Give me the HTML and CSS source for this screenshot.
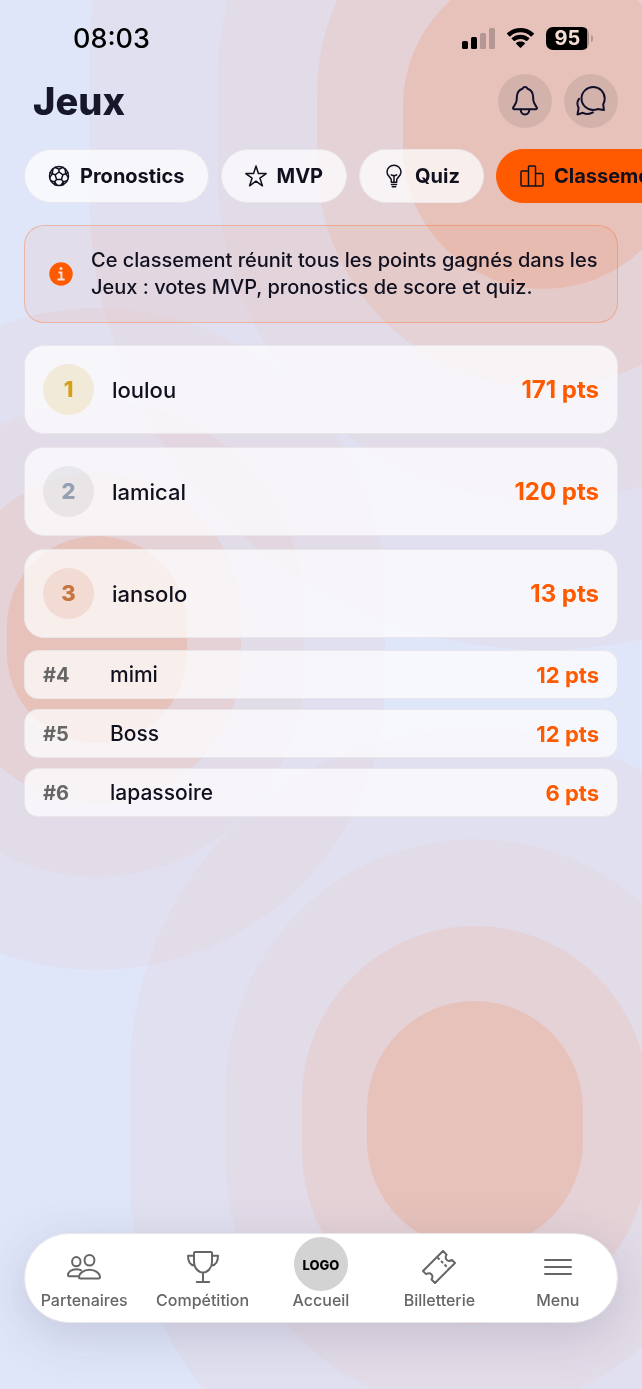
FILE: index.html
```html
<!DOCTYPE html>
<html lang="fr">
<head>
    <meta charset="UTF-8">
    <meta name="viewport" content="width=device-width, initial-scale=1.0">
    <title>Jeux</title>
    <link rel="stylesheet" href="styles.css">
</head>
<body>
    <svg class="backdrop" viewBox="0 0 642 1389" preserveAspectRatio="xMidYMid slice" aria-hidden="true">
        <g class="blob">
            <rect class="ring-outer" x="89" y="-396" width="910" height="1046" rx="455"/>
            <rect class="ring-outer" x="218" y="-248" width="652" height="749" rx="326"/>
            <rect class="ring-middle" x="317" y="-133" width="454" height="520" rx="227"/>
            <rect class="ring-inner" x="403" y="-35" width="282" height="324" rx="141"/>
        </g>
        <g class="blob">
            <rect class="ring-outer" x="-191" y="308" width="576" height="662" rx="288"/>
            <rect class="ring-outer" x="-110" y="401" width="414" height="476" rx="207"/>
            <rect class="ring-middle" x="-47" y="473" width="288" height="331" rx="144"/>
            <rect class="ring-inner" x="7" y="536" width="180" height="207" rx="90"/>
        </g>
        <g class="blob">
            <rect class="ring-outer" x="130" y="728" width="690" height="794" rx="345"/>
            <rect class="ring-outer" x="226" y="839" width="498" height="572" rx="249"/>
            <rect class="ring-middle" x="302" y="926" width="346" height="398" rx="173"/>
            <rect class="ring-inner" x="367" y="1001" width="216" height="248" rx="108"/>
        </g>
    </svg>

    <div class="status-bar">
        <span class="time">08:03</span>
        <div class="status-icons">
            <svg width="33" height="21" viewBox="0 0 33 21" aria-hidden="true">
                <rect x="0" y="13" width="6" height="8" rx="1.5"/>
                <rect x="9" y="9" width="6" height="12" rx="1.5"/>
                <rect class="faded" x="18" y="5" width="6" height="16" rx="1.5"/>
                <rect class="faded" x="27" y="0" width="6" height="21" rx="1.5"/>
            </svg>
            <svg width="29" height="21" viewBox="0 0 29 21" aria-hidden="true">
                <path d="M14.5 4.3c3.9 0 7.5 1.5 10.2 4.1.2.2.5.2.8 0l2.4-2.4c.2-.3.2-.6 0-.8-7.4-6.9-19.4-6.9-26.8 0-.2.2-.2.5 0 .8l2.4 2.4c.3.2.6.2.8 0C7 5.8 10.6 4.3 14.5 4.3z"/>
                <path d="M14.5 10.9c2.2 0 4.2.8 5.7 2.2.3.2.6.2.8 0l2.3-2.3c.2-.3.2-.6 0-.8-5-4.5-12.6-4.5-17.6 0-.2.2-.2.5 0 .8l2.3 2.3c.2.2.5.2.8 0 1.500-1.400 3.500-2.200 5.700-2.200z"/>
                <path d="M18.900 15.800c.2-.2.2-.6 0-.8-2.500-1.900-6.300-1.900-8.800 0-.2.2-.2.6 0 .8l4 4c.2.2.6.2.8 0z"/>
            </svg>
            <div class="battery">
                <span class="battery-level">95</span>
                <span class="battery-tip"></span>
            </div>
        </div>
    </div>

    <header class="page-header">
        <h1>Jeux</h1>
        <div class="header-actions">
            <button type="button" class="round-btn" aria-label="Notifications">
                <svg class="line-icon" width="26" height="30" viewBox="0 0 26 30">
                    <path d="M13 1c-1.300 0-2.100.8-2.500 1.700C6.800 4 5 7 4.900 10.500l-.2 3.500c-.2 4-3.400 6.500-3.600 8-.1.700.4 1.300 1.200 1.300h21.400c.8 0 1.300-.6 1.200-1.300-.2-1.500-3.400-4-3.600-8l-.2-3.500C21 7 19.200 4 15.500 2.700 15.100 1.800 14.300 1 13 1z"/>
                    <path d="M8.600 23.500c.2 2.900 1.900 4.900 4.400 4.900s4.200-2 4.400-4.900"/>
                </svg>
            </button>
            <button type="button" class="round-btn" aria-label="Messages">
                <svg class="line-icon" width="30" height="30" viewBox="0 0 30 30">
                    <path d="M27.200 18.200c1-1.700 1.500-3.700 1.500-5.700C28.700 6.200 23.600 1 17.200 1S5.500 6.200 5.500 12.500 10.800 24 17.200 24c1.500 0 3-.3 4.300-.9l6.400 1z"/>
                    <path d="M3 12.800c-2 2.800-2 6-.4 9L1.500 28.500l5.400-1.700c3 1.500 7 1.400 10-.4"/>
                </svg>
            </button>
        </div>
    </header>

    <div class="tabs">
        <button type="button" class="tab">
            <svg class="tab-icon" width="22" height="22" viewBox="0 0 22 22" aria-hidden="true">
                <circle cx="11" cy="11" r="9.5"/>
                <path d="M11 7l3.900 2.800-1.500 4.600H8.600L7.100 9.800zM11 7V4.200M14.900 9.800l2.900-1M13.400 14.400l1.800 2.400M8.600 14.400l-1.800 2.400M7.100 9.800l-2.900-1M7 2.400l4 1.800 4-1.800M20 7.700l-2.200 1.100L17 4M20.400 12.600l-2.600-3.800M19 16l-3.800.8.3 3M13 20.300l2.200-3.500M9 20.300l-2.200-3.500-.3 3M3 16l3.800.8M1.600 12.600l2.600-3.800L2 7.700M5 4l-.8 4.800"/>
            </svg>
            Pronostics
        </button>
        <button type="button" class="tab">
            <svg class="tab-icon" width="22" height="22" viewBox="0 0 22 22" aria-hidden="true">
                <path d="M11 1l2.400 7.600h7.800l-6.300 4.500 2.500 7.700L11 16.100 4.600 20.800l2.500-7.700L.8 8.600h7.800z"/>
            </svg>
            MVP
        </button>
        <button type="button" class="tab">
            <svg class="tab-icon" width="22" height="24" viewBox="0 0 22 24" aria-hidden="true">
                <path d="M8.300 18.300v-2.200c0-1.200-.6-1.800-1.500-2.700C5 11.800 4 10.300 4 8c0-3.800 3.100-6.800 7-6.800S18 4.200 18 8c0 2.300-1 3.800-2.800 5.400-.9.900-1.500 1.500-1.500 2.700v2.200zM8.500 20.500h5M9.300 22.700h3.400M11 18v-6.500M8.300 10.800c1.800 1 3.600 1 5.400 0"/>
            </svg>
            Quiz
        </button>
        <button type="button" class="tab active">
            <svg class="tab-icon" width="24" height="22" viewBox="0 0 24 22" aria-hidden="true">
                <path d="M8.500 21V2c0-.6.4-1 1-1h5c.6 0 1 .4 1 1v19M8.500 6H2c-.6 0-1 .4-1 1v13c0 .6.4 1 1 1h20c.6 0 1-.4 1-1V9.500c0-.6-.4-1-1-1h-6.500"/>
            </svg>
            Classement
        </button>
    </div>

    <main>
        <div class="info-box">
            <svg class="info-icon" width="24" height="24" viewBox="0 0 24 24" aria-hidden="true">
                <circle class="info-disc" cx="12" cy="12" r="11.7"/>
                <circle class="info-dot" cx="12" cy="6.5" r="1.5"/>
                <path class="info-stem" d="M9.500 10.500h2.900v7M8.500 17.500h7.200"/>
            </svg>
            <p>Ce classement réunit tous les points gagnés dans les Jeux : votes MVP, pronostics de score et quiz.</p>
        </div>

        <ol class="podium">
            <li class="player-card">
                <span class="medal gold">1</span>
                <span class="player">loulou</span>
                <span class="points">171 pts</span>
            </li>
            <li class="player-card">
                <span class="medal silver">2</span>
                <span class="player">lamical</span>
                <span class="points">120 pts</span>
            </li>
            <li class="player-card">
                <span class="medal bronze">3</span>
                <span class="player">iansolo</span>
                <span class="points">13 pts</span>
            </li>
        </ol>

        <ol class="ranking" start="4">
            <li class="player-row">
                <span class="rank">#4</span>
                <span class="player">mimi</span>
                <span class="points">12 pts</span>
            </li>
            <li class="player-row">
                <span class="rank">#5</span>
                <span class="player">Boss</span>
                <span class="points">12 pts</span>
            </li>
            <li class="player-row">
                <span class="rank">#6</span>
                <span class="player">lapassoire</span>
                <span class="points">6 pts</span>
            </li>
        </ol>
    </main>

    <nav class="bottom-nav">
        <a href="#partenaires" class="nav-item">
            <span class="nav-icon">
                <svg width="34" height="26" viewBox="0 0 34 26" aria-hidden="true">
                    <ellipse cx="9.3" cy="7.7" rx="4.2" ry="4.6"/>
                    <ellipse cx="22.5" cy="6.3" rx="4.9" ry="5.3"/>
                    <path d="M10.500 22.300H2c-.7 0-1-.4-1-1 0-3.300 3.300-6 8.300-6 1.800 0 3.300.3 4.600.9M22.500 15.800c-6.300 0-10.500 3.800-10.500 7.200 0 .9.5 1.500 1.500 1.500h18c1 0 1.500-.6 1.500-1.500 0-3.400-4.200-7.200-10.500-7.200z"/>
                </svg>
            </span>
            Partenaires
        </a>
        <a href="#competition" class="nav-item">
            <span class="nav-icon">
                <svg width="32" height="32" viewBox="0 0 32 32" aria-hidden="true">
                    <path d="M7 2c0-.6.4-1 1-1h16c.6 0 1 .4 1 1v9c0 6-4.500 10.500-9 10.500S7 17 7 11zM7 4.700H1c0 5 2 9.300 6.300 9.800M25 4.700h6c0 5-2 9.300-6.300 9.800M16 21.500V31M9.800 31h12.400"/>
                </svg>
            </span>
            Compétition
        </a>
        <a href="#accueil" class="nav-item">
            <span class="nav-icon"><span class="logo">LOGO</span></span>
            Accueil
        </a>
        <a href="#billetterie" class="nav-item">
            <span class="nav-icon">
                <svg width="34" height="34" viewBox="0 0 34 34" aria-hidden="true">
                    <path d="M21 1L1 21l3.100 3.100c2-1.100 4.200-1 5.300.1s1.300 3.200.1 5.300L13 33l20-20-3-3c-2 1.100-4.200 1-5.300-.1s-1.300-3.200-.1-5.300z"/>
                    <path class="perforation" d="M15.500 7.500l11 11"/>
                </svg>
            </span>
            Billetterie
        </a>
        <a href="#menu" class="nav-item">
            <span class="nav-icon">
                <svg width="28" height="16" viewBox="0 0 28 16" aria-hidden="true">
                    <path d="M1 1h26M1 8h26M1 15h26"/>
                </svg>
            </span>
            Menu
        </a>
    </nav>
</body>
</html>
```
FILE: styles.css
```css
* {
    box-sizing: border-box;
}
body {
    font-family: Inter, "Liberation Sans", sans-serif;
    background: #e0e6f9;
    color: #10101f;
    margin: 0;
    min-height: 100vh;
    display: flex;
    flex-direction: column;
    overflow-x: hidden;
}
button {
    font: inherit;
    color: inherit;
    border: none;
    cursor: pointer;
}
svg {
    flex: none;
}

/* background rings */
.backdrop {
    position: fixed;
    inset: 0;
    width: 100%;
    height: 100%;
    z-index: -1;
}
.blob {
    fill: #ff5a00;
}
.ring-outer {
    fill-opacity: 0.035;
}
.ring-middle {
    fill-opacity: 0.075;
}
.ring-inner {
    fill-opacity: 0.135;
}

.status-bar {
    display: flex;
    justify-content: space-between;
    align-items: center;
    padding: 10px 49px 8px 73px;
    height: 74px;
    color: #000;
}
.time {
    font-size: 27px;
    font-weight: 500;
}
.status-icons {
    display: flex;
    align-items: center;
    gap: 11px;
}
.faded {
    opacity: 0.22;
}
.battery {
    display: flex;
    align-items: center;
    gap: 2px;
}
.battery-level {
    width: 43px;
    height: 23px;
    border-radius: 7px;
    background: linear-gradient(90deg, #000 95%, #a88e87 95%);
    color: #f3dcd6;
    font-size: 20px;
    font-weight: 700;
    line-height: 23px;
    text-align: center;
}
.battery-tip {
    width: 2px;
    height: 7px;
    border-radius: 0 2px 2px 0;
    background: #b59a92;
}

.page-header {
    display: flex;
    justify-content: space-between;
    align-items: center;
    padding: 0 24px 0 33px;
}
h1 {
    margin: 0;
    font-size: 38px;
    line-height: 52px;
    font-weight: 800;
    color: #17172b;
}
.header-actions {
    display: flex;
    gap: 12px;
}
.round-btn {
    width: 54px;
    height: 54px;
    padding: 0;
    border-radius: 50%;
    background: rgba(0, 0, 0, 0.08);
    display: flex;
    align-items: center;
    justify-content: center;
}
.line-icon {
    fill: none;
    stroke: #10102a;
    stroke-width: 2;
    stroke-linejoin: round;
    stroke-linecap: round;
}

.tabs {
    display: flex;
    gap: 12px;
    padding: 21px 24px 22px;
    overflow-x: auto;
    scrollbar-width: none;
}
.tab {
    display: flex;
    align-items: center;
    gap: 10px;
    flex: none;
    height: 54px;
    padding: 0 23px;
    border: 1px solid #e9e6ea;
    border-radius: 27px;
    background: rgba(255, 255, 255, 0.72);
    font-size: 20px;
    font-weight: 700;
}
.tab.active {
    background: #ff5a00;
    border-color: #ff5a00;
}
.tab-icon {
    fill: none;
    stroke: currentColor;
    stroke-width: 1.5;
    stroke-linejoin: round;
    stroke-linecap: round;
}

main {
    flex: 1;
    padding: 0 24px 24px;
}
.info-box {
    display: flex;
    align-items: center;
    gap: 18px;
    padding: 21px 16px 21px 24px;
    border: 1px solid rgba(255, 90, 0, 0.3);
    border-radius: 20px;
    background: rgba(255, 90, 0, 0.06);
    margin-bottom: 22px;
}
.info-box p {
    margin: 0;
    font-size: 20px;
    line-height: 27px;
    font-weight: 500;
}
.info-disc {
    fill: #ff5a00;
}
.info-dot {
    fill: #f0e2e0;
}
.info-stem {
    fill: none;
    stroke: #f0e2e0;
    stroke-width: 2;
}

.podium,
.ranking {
    list-style: none;
    margin: 0;
    padding: 0;
    display: flex;
    flex-direction: column;
}
.podium {
    gap: 13px;
    margin-bottom: 12px;
}
.ranking {
    gap: 10px;
}
.player-card,
.player-row {
    display: flex;
    align-items: center;
    padding: 0 18px;
    border: 1px solid #e9e6ea;
    background: rgba(255, 255, 255, 0.72);
}
.player-card {
    gap: 18px;
    height: 89px;
    border-radius: 20px;
    font-size: 22px;
}
.player-row {
    gap: 16px;
    height: 49px;
    border-radius: 14px;
    font-size: 21px;
}
.medal {
    width: 51px;
    height: 51px;
    border-radius: 50%;
    line-height: 51px;
    text-align: center;
    font-weight: 800;
}
.gold {
    background: rgba(212, 160, 23, 0.15);
    color: #d4a017;
}
.silver {
    background: rgba(120, 130, 140, 0.12);
    color: #94a0b2;
}
.bronze {
    background: rgba(200, 117, 60, 0.15);
    color: #c87541;
}
.rank {
    width: 51px;
    font-size: 20px;
    font-weight: 700;
    color: #666;
}
.player {
    flex: 1;
    font-weight: 500;
}
.points {
    color: #ff5a00;
    font-weight: 700;
}
.player-card .points {
    font-size: 24px;
}
.player-row .points {
    font-size: 22px;
}

.bottom-nav {
    display: grid;
    grid-template-columns: repeat(5, 1fr);
    margin: 0 24px 66px;
    height: 90px;
    padding-top: 3px;
    border: 1px solid #e9e6ea;
    border-radius: 45px;
    background: #fff;
    box-shadow: 0 12px 48px rgba(60, 60, 90, 0.18);
}
.nav-item {
    display: flex;
    flex-direction: column;
    align-items: center;
    color: #666;
    font-size: 16px;
    line-height: 18px;
    font-weight: 500;
    text-decoration: none;
}
.nav-icon {
    display: flex;
    align-items: center;
    justify-content: center;
    height: 54px;
}
.nav-icon svg {
    margin-top: 6px;
    fill: none;
    stroke: currentColor;
    stroke-width: 2;
    stroke-linejoin: round;
    stroke-linecap: round;
}
.nav-icon .perforation {
    stroke-linecap: butt;
    stroke-dasharray: 3 2;
}
.logo {
    width: 54px;
    height: 54px;
    border-radius: 50%;
    background: #d3d3d3;
    color: #000;
    font-size: 13px;
    line-height: 56px;
    font-weight: 800;
    text-align: center;
}
```
